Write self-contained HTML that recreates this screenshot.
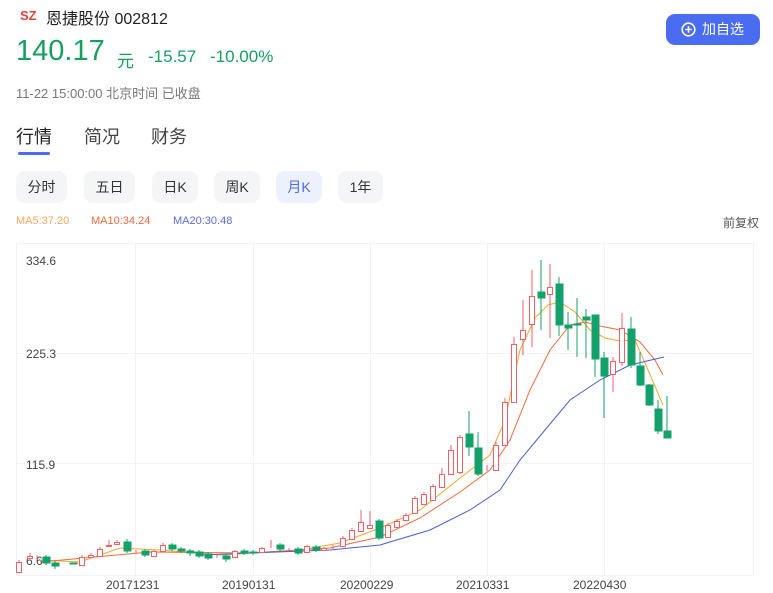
<!DOCTYPE html>
<html><head><meta charset="utf-8"><style>
*{margin:0;padding:0;box-sizing:border-box}
body{width:773px;height:593px;background:#fff;font-family:"Liberation Sans","Noto Sans CJK SC",sans-serif;position:relative;overflow:hidden;color:#333}
.a{position:absolute;white-space:nowrap}
.btn{position:absolute;top:171px;height:32px;border-radius:9px;background:#f4f5f7;font-size:14px;color:#333;text-align:center;line-height:32px}
</style></head><body>
<div class="a" style="left:20px;top:8px;font-size:13px;font-weight:bold;color:#e8413c">SZ</div>
<div class="a" style="left:46px;top:5px;font-size:16px;color:#222">恩捷股份 002812</div>
<div class="a" style="left:16px;top:35px;font-size:29px;color:#15a05f">140.17</div>
<div class="a" style="left:117px;top:47px;font-size:17px;color:#15a05f">元</div>
<div class="a" style="left:148px;top:47px;font-size:17px;color:#15a05f">-15.57</div>
<div class="a" style="left:210px;top:47px;font-size:17px;color:#15a05f">-10.00%</div>
<div class="a" style="left:16px;top:83px;font-size:13px;color:#777">11-22 15:00:00 北京时间 已收盘</div>
<div class="a" style="left:16px;top:123px;font-size:18px;color:#222">行情</div>
<div class="a" style="left:84px;top:123px;font-size:18px;color:#444">简况</div>
<div class="a" style="left:151px;top:123px;font-size:18px;color:#444">财务</div>
<div class="a" style="left:18px;top:152px;width:32px;height:3px;background:#4a6cf0;border-radius:2px"></div>
<div class="btn" style="left:16px;width:51px">分时</div>
<div class="btn" style="left:84px;width:51px">五日</div>
<div class="btn" style="left:152px;width:46px">日K</div>
<div class="btn" style="left:214px;width:46px">周K</div>
<div class="btn" style="left:276px;width:46px;background:#edf0fd;color:#4a6cf0">月K</div>
<div class="btn" style="left:338px;width:45px">1年</div>
<div class="a" style="left:16px;top:215px;font-size:11px;color:#f0a860">MA5:37.20</div>
<div class="a" style="left:91px;top:215px;font-size:11px;color:#f06a3a">MA10:34.24</div>
<div class="a" style="left:173px;top:215px;font-size:11px;color:#5a6ad8">MA20:30.48</div>
<div class="a" style="left:723px;top:214px;font-size:12px;color:#555">前复权</div>
<div class="a" style="left:666px;top:14px;width:94px;height:31px;border-radius:9px;background:#4a6cf0;color:#fff;font-size:14px;line-height:31px;padding-left:36px">加自选</div>
<svg class="a" style="left:681px;top:22px" width="15" height="15" viewBox="0 0 15 15"><circle cx="7.5" cy="7.5" r="6.3" fill="none" stroke="#fff" stroke-width="1.6"/><path d="M7.5 4.3v6.4M4.3 7.5h6.4" stroke="#fff" stroke-width="1.6"/></svg>
<svg class="a" style="left:0;top:0" width="773" height="593">
<g stroke="#f3f3f5" stroke-width="1" fill="none">
<rect x="16.5" y="243.5" width="737" height="332"/>
<path d="M17 353.5H753M17 463.5H753M135.5 244V575M253.5 244V575M370.5 244V575M487.5 244V575M604.5 244V575"/>
</g>
<g font-size="12" fill="#444"><text x="26" y="265">334.6</text><text x="26" y="358">225.3</text><text x="26" y="469">115.9</text><text x="26" y="565">6.6</text></g>
<g font-size="12" fill="#444"><text x="106" y="589">20171231</text><text x="222" y="589">20190131</text><text x="340" y="589">20200229</text><text x="456" y="589">20210331</text><text x="573" y="589">20220430</text></g>
<g fill="none" stroke-width="1">
<path stroke="#f0a830" d="M40 560L80 562L120 548L160 550L220 555L300 550L340 543L380 528L420 510L460 478L490 455L505 420L520 350L535 318L548 305L560 302L575 312L590 330L605 338L620 341L635 340L648 370L663 405"/>
<path stroke="#f06a3a" d="M40 562L150 552L250 553L330 548L380 537L420 518L460 492L490 470L510 440L530 390L550 350L570 325L585 322L600 326L620 330L640 342L655 360L663 375"/>
<path stroke="#4a5fd8" d="M200 555L330 550L380 545L430 530L470 510L500 490L520 460L545 430L570 400L600 380L630 365L664 357"/>
</g>
<g stroke="#f0606a" fill="#fff" stroke-width="1">
<path d="M19 560V573M30 553V559M37 555V559M82 555V566M91 553V558M100 547V557M109 540V547M117 540V545M136 550V553M154 550V557M163 543V552M217 554V558M235 550V558M262 547V553M271 540V548M289 548V551M307 545V553M324 547V551M333 545V549M343 536V547M352 528V540M361 510V532M370 511V529M388 523V538M397 519V528M406 513V521M415 496V514M424 492V505M433 484V501M442 468V488M451 445V475M460 435V474M487 465V471M496 442V471M505 398V446M514 337V403M523 300V355M532 270V347M550 264V338M613 357V392M622 313V366"/>
<rect x="16.5" y="562.5" width="5" height="10"/><rect x="27.5" y="556.5" width="5" height="2"/><rect x="79.5" y="557.5" width="5" height="8"/><rect x="88.5" y="555.5" width="5" height="2"/><rect x="97.5" y="549.5" width="5" height="7"/><rect x="106.5" y="545.5" width="5" height="1"/><rect x="114.5" y="542.5" width="5" height="2"/><rect x="151.5" y="551.5" width="5" height="5"/><rect x="160.5" y="545.5" width="5" height="6"/><rect x="232.5" y="551.5" width="5" height="6"/><rect x="259.5" y="548.5" width="5" height="4"/><rect x="304.5" y="546.5" width="5" height="6"/><rect x="321.5" y="548.5" width="5" height="2"/><rect x="340.5" y="538.5" width="5" height="8"/><rect x="349.5" y="530.5" width="5" height="9"/><rect x="358.5" y="522.5" width="5" height="9"/><rect x="367.5" y="525.5" width="5" height="3"/><rect x="385.5" y="525.5" width="5" height="12"/><rect x="394.5" y="521.5" width="5" height="6"/><rect x="403.5" y="515.5" width="5" height="5"/><rect x="412.5" y="498.5" width="5" height="15"/><rect x="421.5" y="494.5" width="5" height="10"/><rect x="430.5" y="486.5" width="5" height="14"/><rect x="439.5" y="474.5" width="5" height="13"/><rect x="448.5" y="450.5" width="5" height="24"/><rect x="457.5" y="437.5" width="5" height="35"/><rect x="493.5" y="445.5" width="5" height="25"/><rect x="502.5" y="402.5" width="5" height="43"/><rect x="511.5" y="344.5" width="5" height="58"/><rect x="520.5" y="330.5" width="5" height="9"/><rect x="529.5" y="296.5" width="5" height="28"/><rect x="547.5" y="287.5" width="5" height="7"/><rect x="610.5" y="361.5" width="5" height="13"/><rect x="619.5" y="328.5" width="5" height="34"/>
</g>
<g stroke="#13a06a" fill="#13a06a" stroke-width="1">
<path d="M46 555V565M55 561V569M127 539V553M145 549V557M172 543V551M181 547V553M190 549V556M199 550V558M208 552V560M226 554V562M244 549V555M253 550V555M280 543V551M298 547V555M316 545V552M379 519V540M469 411V456M478 432V476M541 260V330M559 277V336M568 312V350M577 298V357M586 309V358M595 315V377M604 352V418M631 317V368M640 352V386M649 384V406M658 400V434M667 396V438"/>
<rect x="43" y="557" width="7" height="6"/><rect x="52" y="563" width="7" height="3"/><rect x="70" y="563" width="7" height="1"/><rect x="124" y="542" width="7" height="9"/><rect x="142" y="551" width="7" height="4"/><rect x="169" y="545" width="7" height="4"/><rect x="178" y="549" width="7" height="2"/><rect x="187" y="551" width="7" height="2"/><rect x="196" y="552" width="7" height="4"/><rect x="205" y="554" width="7" height="4"/><rect x="223" y="556" width="7" height="3"/><rect x="241" y="551" width="7" height="2"/><rect x="250" y="552" width="7" height="1"/><rect x="277" y="545" width="7" height="4"/><rect x="295" y="549" width="7" height="4"/><rect x="313" y="547" width="7" height="3"/><rect x="376" y="521" width="7" height="17"/><rect x="466" y="434" width="7" height="13"/><rect x="475" y="448" width="7" height="26"/><rect x="538" y="292" width="7" height="6"/><rect x="556" y="284" width="7" height="41"/><rect x="565" y="325" width="7" height="3"/><rect x="574" y="324" width="7" height="1"/><rect x="583" y="317" width="7" height="3"/><rect x="592" y="315" width="7" height="44"/><rect x="601" y="358" width="7" height="18"/><rect x="628" y="329" width="7" height="36"/><rect x="637" y="366" width="7" height="19"/><rect x="646" y="385" width="7" height="20"/><rect x="655" y="409" width="7" height="22"/><rect x="664" y="431" width="7" height="7"/>
</g>
</svg>
</body></html>
